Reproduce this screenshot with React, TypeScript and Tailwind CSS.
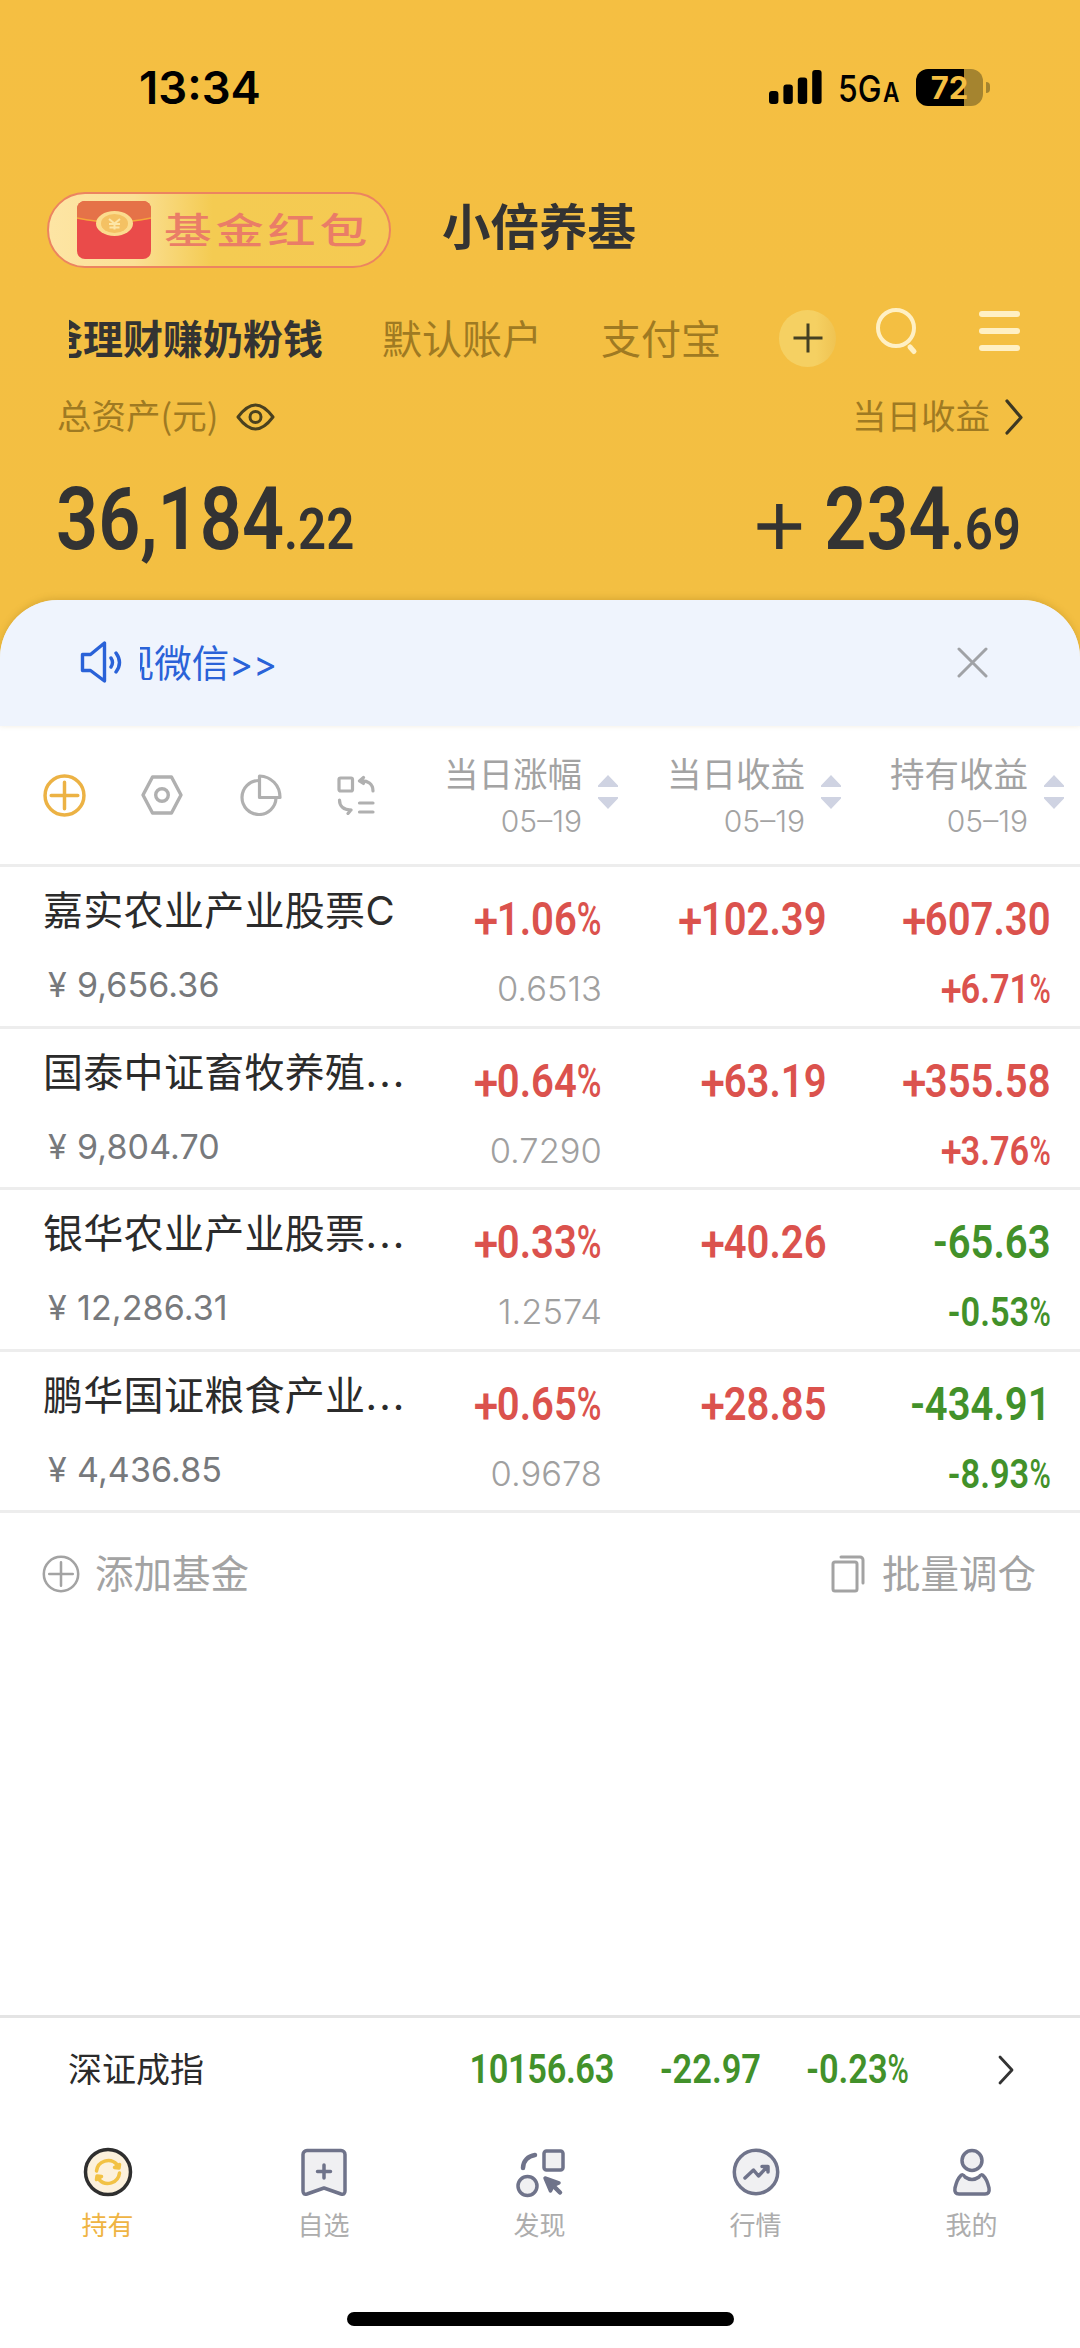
import type { ReactNode } from 'react';

type Tone = 'up' | 'down';

interface Fund {
  name: string;
  clipped?: boolean;
  amount: string;
  rate: string;
  nav: string;
  today: string;
  total: string;
  totalRate: string;
  tone: Tone;
}

const funds: Fund[] = [
  { name: '嘉实农业产业股票C', amount: '9,656.36', rate: '+1.06%', nav: '0.6513', today: '+102.39', total: '+607.30', totalRate: '+6.71%', tone: 'up' },
  { name: '国泰中证畜牧养殖', clipped: true, amount: '9,804.70', rate: '+0.64%', nav: '0.7290', today: '+63.19', total: '+355.58', totalRate: '+3.76%', tone: 'up' },
  { name: '银华农业产业股票', clipped: true, amount: '12,286.31', rate: '+0.33%', nav: '1.2574', today: '+40.26', total: '-65.63', totalRate: '-0.53%', tone: 'down' },
  { name: '鹏华国证粮食产业', clipped: true, amount: '4,436.85', rate: '+0.65%', nav: '0.9678', today: '+28.85', total: '-434.91', totalRate: '-8.93%', tone: 'down' },
];

const columns = ['当日涨幅', '当日收益', '持有收益'];

const toneClass: Record<Tone, string> = { up: 'text-[#db524d]', down: 'text-[#42912a]' };

function StatusBar() {
  return (
    <div className="flex h-[174px] items-center pl-[139px] pr-[90px] text-black">
      <span className="origin-left scale-x-[1.01] font-[Inter] text-[45px] font-semibold leading-none">13:34</span>
      <div className="ml-auto flex items-center">
        <svg width="54" height="34" viewBox="0 0 54 34">
          <rect x="0" y="21" width="9.4" height="13" rx="3" />
          <rect x="14.4" y="14.5" width="9.4" height="19.5" rx="3" />
          <rect x="28.8" y="7.5" width="9.4" height="26.5" rx="3" />
          <rect x="43.2" y="0" width="9.4" height="34" rx="3" />
        </svg>
        <div className="ml-[15px] mt-[3px] flex w-[78px] items-baseline font-[Inter] font-medium leading-none">
          <span className="origin-left scale-x-[0.86] text-[37px]">5G</span>
          <span className="-ml-[6px] text-[27px] font-semibold leading-none">
            <span className="inline-block origin-left scale-x-[0.84]">A</span>
          </span>
        </div>
        <div className="flex h-[37px] w-[67px] items-center justify-center rounded-[12px] bg-[linear-gradient(90deg,#000_72%,#a5842f_72%)]">
          <span className="font-[Inter] text-[31px] font-bold leading-none text-[#f5bf42]">72</span>
        </div>
        <div className="ml-[3px] h-[11px] w-1 rounded-r-full bg-[#a5842f]" />
      </div>
    </div>
  );
}

function RedPacket() {
  return (
    <svg width="74" height="58" viewBox="0 0 74 58">
      <rect width="74" height="58" rx="8" fill="#ea4b4a" />
      <path d="M0 18V8a8 8 0 0 1 8-8h58a8 8 0 0 1 8 8v10Q37 24 0 18Z" fill="#e57248" />
      <path d="M0 17Q37 25 74 17" fill="none" stroke="#f6a63a" strokeWidth="1.6" />
      <ellipse cx="37.500" cy="22.500" rx="18.500" ry="12.500" fill="#fbdc8e" />
      <ellipse cx="37.500" cy="22.500" rx="13.500" ry="9.500" fill="#f4c163" />
      <path d="m32 18 5.500 4.500L43 18M32 23h11M32.500 26.500h10M37.500 22.500v6" fill="none" stroke="#fde6a6" strokeWidth="2" />
    </svg>
  );
}

function PlusCircle({ size, width }: { size: number; width: number }) {
  return (
    <svg width={size} height={size} viewBox="0 0 42 42" fill="none" stroke="currentColor" strokeWidth={width} strokeLinecap="round">
      <circle cx="21" cy="21" r="19" />
      <path d="M21 8v26M8 21h26" />
    </svg>
  );
}

function Header() {
  return (
    <header className="h-[600px] bg-linear-to-b from-[#f5bf42] to-[#f3bf42] text-[#333]">
      <StatusBar />
      <div className="flex h-[112px] items-center pl-[47px]">
        <div className="flex h-[76px] w-[344px] items-center rounded-full border-2 border-[#ec8460] bg-[linear-gradient(90deg,#fde5a4_0%,#fbe096_25%,#f4cb52_48%,#f5ca52_100%)] pl-7">
          <RedPacket />
          <span className="ml-[13px] origin-left scale-x-[1.33] pb-[4px] text-[36px] font-medium leading-none tracking-[3px] text-[#ea7d67]">基金红包</span>
        </div>
        <h1 className="ml-[51px] pb-[12px] text-[48.500px] font-bold leading-none">小倍养基</h1>
      </div>
      <div className="flex h-[104px] items-center">
        <div className="ml-[69px] flex w-[767px] items-center overflow-hidden text-[40px] leading-[60px]">
          <span className="-ml-[26px] shrink-0 pb-[3px] font-bold">爸理财赚奶粉钱</span>
          <span className="ml-[59px] shrink-0 pb-[3px] text-[#9f7a22]">默认账户</span>
          <span className="ml-[59px] shrink-0 pb-[3px] text-[#9f7a22]">支付宝</span>
          <span className="ml-[58px] flex size-[57px] shrink-0 items-center justify-center rounded-full bg-[linear-gradient(90deg,#f5d062_65%,#efc352_100%)]">
            <svg width="30" height="30" viewBox="0 0 30 30" stroke="#444023" strokeWidth="3">
              <path d="M15 0.500v29M0.500 15h29" />
            </svg>
          </span>
        </div>
        <svg className="mb-[15px] ml-[40px]" width="42" height="50" viewBox="0 0 42 50" fill="none" stroke="#fff0c4" strokeLinecap="round">
          <circle cx="20" cy="22" r="18" strokeWidth="4" />
          <path d="m34 41 4 4.500" strokeWidth="5" />
        </svg>
        <svg className="mb-[15px] ml-[61px]" width="41" height="42" viewBox="0 0 41 42" stroke="#fff0c4" strokeWidth="6" strokeLinecap="round">
          <path d="M3 4h35M3 21h35M3 38h35" />
        </svg>
      </div>
      <div className="flex h-[52px] items-center pl-[57px] pr-[57px] text-[34.500px] leading-none text-[#9f7a22]">
        <span className="pb-[3px]">总资产(元)</span>
        <svg className="ml-[18px] mt-px" width="39" height="28" viewBox="0 0 39 28" fill="none" stroke="#4a411f" strokeWidth="3">
          <path d="M2 14C5 10 11 2 19.500 2S34 10 37 14c-3 4-9 12-17.500 12S5 18 2 14Z" strokeLinejoin="round" />
          <circle cx="19.500" cy="14" r="5.500" />
        </svg>
        <span className="ml-auto pb-[3px]">当日收益</span>
        <svg className="ml-[15px] mt-px" width="18" height="36" viewBox="0 0 18 36" fill="none" stroke="#3d3823" strokeWidth="3.200" strokeLinecap="round" strokeLinejoin="round">
          <path d="m2 2 14 16.500L2 34" />
        </svg>
      </div>
      <div className="flex items-baseline justify-between pl-[56px] pr-[59px] pt-[34px] font-[Roboto] font-semibold leading-none">
        <div className="origin-left scale-x-[0.848] whitespace-nowrap">
          <span className="text-[87px]">36,184</span>
          <span className="text-[58px]">.22</span>
        </div>
        <div className="flex origin-right scale-x-[0.848] items-baseline whitespace-nowrap">
          <svg className="mr-[27px]" width="52" height="45" viewBox="0 0 52 45" stroke="currentColor">
            <path d="M26 0v45" strokeWidth="7.600" />
            <path d="M0 22.500h52" strokeWidth="6.400" />
          </svg>
          <span className="text-[87px]">234</span>
          <span className="text-[58px]">.69</span>
        </div>
      </div>
    </header>
  );
}

function Notice() {
  return (
    <div className="flex h-[126px] items-center rounded-t-[58px] bg-[#eff4fd] pb-[2px] pl-20 pr-[92px] shadow-[0_-2px_6px_rgba(150,110,20,0.25)]">
      <svg width="42" height="42" viewBox="0 0 42 42" fill="none" stroke="#2a62d8" strokeWidth="3.400" strokeLinecap="round" strokeLinejoin="round">
        <path d="M2.500 13.500h8L24.500 2v38L10.500 29.500h-8Z" />
        <path d="M31 17q3 4.500 0 9M36 12q7 9.500 0 19" />
      </svg>
      <div className="ml-[18px] flex w-[137px] justify-end overflow-hidden text-[37.500px] leading-[56px] text-[#2a62d8]">
        <span className="shrink-0">现微信<span className="inline-block font-[Inter] text-[36px] font-normal">&gt;&gt;</span></span>
      </div>
      <svg className="ml-auto" width="31" height="31" viewBox="0 0 31 31" stroke="#a0a2a6" strokeWidth="3" strokeLinecap="round">
        <path d="m2 2 27 27M29 2 2 29" />
      </svg>
    </div>
  );
}

function SortArrows() {
  return (
    <svg className="mb-[7px]" width="20" height="34" viewBox="0 0 20 34" fill="#cfd3e2">
      <path d="M10 0 20 10.500V12H0v-1.500ZM0 22h20v1.500L10 34 0 23.500Z" />
    </svg>
  );
}

function Toolbar() {
  return (
    <div className="flex h-[141px] items-center border-b-[3px] border-[#ededed] pl-[43px] pr-4 text-[#b0b0b0]">
      <span className="text-[#ecb244]"><PlusCircle size={43} width={3.4} /></span>
      <svg className="ml-[55px]" width="42" height="40" viewBox="0 0 42 40" fill="none" stroke="currentColor" strokeWidth="3.400" strokeLinejoin="round">
        <path d="M11.500 2h19L40 20l-9.500 18h-19L2 20Z" />
        <circle cx="21" cy="20" r="6.300" />
      </svg>
      <svg className="ml-[57px]" width="42" height="42" viewBox="0 0 42 42" fill="none" stroke="currentColor" strokeWidth="3.200" strokeLinejoin="round">
        <path d="M19 6.500A17 17 0 1 0 36 24" />
        <path d="M19.500 2v21.500H40C40 11 31 2.500 19.500 2Z" />
      </svg>
      <svg className="ml-[55px]" width="38" height="40" viewBox="0 0 38 40" fill="none" stroke="currentColor" strokeWidth="3.200" strokeLinecap="round" strokeLinejoin="round">
        <rect x="2" y="3" width="13.500" height="13" rx="1.500" />
        <path d="M22.500 6C31 5 36 9 36 16M22.500 6l4-3.500M22.500 6l4 2.500M2.500 25c0 6 4 10 11.500 10M14 35l-4.500-.5M14 35l-3 3.500M22.500 28H36M22.500 37H36" />
      </svg>
      <div className="ml-auto flex">
        {columns.map((label) => (
          <div key={label} className="flex w-[223px] items-center justify-end gap-[16px] text-right text-[#a3a3a3]">
            <div>
              <div className="text-[34.500px] leading-[50px]">{label}</div>
              <div className="pt-[2px] font-[Inter] text-[30px] font-light leading-[44px]">05–19</div>
            </div>
            <SortArrows />
          </div>
        ))}
      </div>
    </div>
  );
}

// Narrow digits anchored to the right edge of their cell; the sign and the percent mark are drawn lighter
function Value({ small, className, children }: { small?: boolean; className: string; children: string }) {
  const sign = children[0] === '+' || children[0] === '-' ? children[0] : '';
  const percent = children.endsWith('%');
  const digits = children.slice(sign.length, percent ? -1 : undefined);
  return (
    <div className={`origin-right whitespace-nowrap text-right font-[Roboto] font-semibold ${small ? 'scale-x-[0.86] text-[40px] leading-[60px]' : 'scale-x-[0.87] text-[46px] leading-[70px]'} ${className}`}>
      {sign === '+' && <span className="inline-block translate-y-[0.03em] scale-110 font-medium leading-none">+</span>}
      {sign === '-' && <span>-</span>}
      {digits}
      {percent && (
        <span className="inline-block w-[0.62em] text-left font-medium leading-none">
          <span className="inline-block origin-left scale-x-[0.84]">%</span>
        </span>
      )}
    </div>
  );
}

function FundRow({ fund }: { fund: Fund }) {
  return (
    <div className="flex h-[161.5px] border-b-[3px] border-[#ededed] pl-[43px] pr-[29px]">
      <div className="w-[380px] pt-[14px]">
        <div className="whitespace-nowrap text-[40px] leading-[60px] tracking-[0.3px] text-[#2b2b2b] font-[Inter,'Noto_Sans_CJK_SC',sans-serif]">
          {fund.name}
          {fund.clipped && <span className="tracking-[2.200px]">...</span>}
        </div>
        <div className="flex items-center pt-[20px] font-[Inter] text-[34px] leading-[48px] text-[#77797c]">
          <span className="w-[34px] pl-[5px]">¥</span>
          <span className="tracking-[0.1px]">{fund.amount}</span>
        </div>
      </div>
      <div className="ml-auto w-[180px] pt-[17px]">
        <Value className={toneClass.up}>{fund.rate}</Value>
        <div className="pt-[10px] text-right font-[Inter] text-[34.500px] font-light leading-[50px] text-[#a0a0a0]">{fund.nav}</div>
      </div>
      <div className="w-[225px] pt-[17px]">
        <Value className={toneClass.up}>{fund.today}</Value>
      </div>
      <div className="w-[225px] pt-[17px]">
        <Value className={toneClass[fund.tone]}>{fund.total}</Value>
        <Value small className={`pt-[6px] ${toneClass[fund.tone]}`}>{fund.totalRate}</Value>
      </div>
    </div>
  );
}

function Actions() {
  return (
    <div className="flex h-[122px] items-center pl-[42px] pr-[44px] text-[38.500px] leading-none text-[#a3a3a3]">
      <PlusCircle size={38} width={2.8} />
      <span className="ml-[15px] pb-[6px]">添加基金</span>
      <svg className="ml-auto" width="34" height="38" viewBox="0 0 34 38" fill="none" stroke="currentColor" strokeWidth="3" strokeLinejoin="round" strokeLinecap="round">
        <rect x="2" y="7" width="24" height="29" rx="2" />
        <path d="M10 2h19a3 3 0 0 1 3 3v23" />
      </svg>
      <span className="ml-[17px] pb-[6px]">批量调仓</span>
    </div>
  );
}

function IndexBar() {
  return (
    <div className="flex h-[107px] items-center border-t-[3px] border-[#e4e4e4] pl-[68px] pr-[66px]">
      <span className="pb-1 text-[34px] leading-none text-[#2b2b2b]">深证成指</span>
      <div className="ml-auto w-[180px]"><Value small className={`tracking-[-0.4px] ${toneClass.down}`}>10156.63</Value></div>
      <div className="w-[147px]"><Value small className={toneClass.down}>-22.97</Value></div>
      <div className="w-[148px]"><Value small className={toneClass.down}>-0.23%</Value></div>
      <svg className="ml-[89px]" width="16" height="30" viewBox="0 0 16 30" fill="none" stroke="#333" strokeWidth="2.800" strokeLinecap="round" strokeLinejoin="round">
        <path d="m2 2 12 13L2 28" />
      </svg>
    </div>
  );
}

const tabs: { label: string; active?: boolean; icon: ReactNode }[] = [
  {
    label: '持有',
    active: true,
    icon: (
      <>
        <circle cx="25" cy="25" r="22.500" fill="#fcf1dc" stroke="#2f2f2f" strokeWidth="3.500" />
        <g fill="none" stroke="#f2c244" strokeWidth="3.500" strokeLinecap="round" strokeLinejoin="round">
          <path d="M13.500 24A11.800 11.800 0 0 1 34 17.500M36.500 26A11.800 11.800 0 0 1 16 32.500" />
          <path d="m36.500 17.500-.5 3.500-4.500-.5ZM13.500 32.500l.5-3.500 4.500.5Z" fill="#f2c244" />
        </g>
      </>
    ),
  },
  {
    label: '自选',
    icon: (
      <>
        <path d="M8 3.500h34a4 4 0 0 1 4 4V44q0 4-4 3L25 41 8 47q-4 1-4-3V7.500a4 4 0 0 1 4-4Z" />
        <path d="M25 18v13M18.500 24.500h13" />
      </>
    ),
  },
  {
    label: '发现',
    icon: (
      <>
        <rect x="29" y="4" width="19" height="19" rx="2.500" />
        <circle cx="12.500" cy="39" r="9.500" />
        <path d="M8 21C8 14 13 9 20 8" fill="none" strokeWidth="4.500" />
        <path d="m30 31 14 5-5.500 2.500-3 5.500Z" fill="#6f738a" />
        <path d="m38 38.500 7 7" strokeWidth="4.500" />
      </>
    ),
  },
  {
    label: '行情',
    icon: (
      <>
        <circle cx="25" cy="25" r="21.700" />
        <path d="m14 31 8.500-8 5 6 9-9.500M31 19.500h6V25" fill="none" />
      </>
    ),
  },
  {
    label: '我的',
    icon: (
      <>
        <circle cx="25" cy="13.500" r="10" />
        <path d="M13 29.500Q16 26 18 30q7 5 14 0 2-4 5-.5 3 3 5 11.500 1 6-4 6H12q-5 0-4-6 2-8.500 5-11.500Z" />
      </>
    ),
  },
];

function TabBar() {
  return (
    <nav className="grid grid-cols-5 pt-[24px]">
      {tabs.map((tab) => (
        <div key={tab.label} className={`flex flex-col items-center ${tab.active ? 'text-[#efb443]' : 'text-[#adadad]'}`}>
          <svg width="52" height="52" viewBox="-1 -1 52 52" fill="#f0f0f2" stroke="#6f738a" strokeWidth="3.500" strokeLinecap="round" strokeLinejoin="round">
            {tab.icon}
          </svg>
          <span className="mt-[6px] pr-px text-[26px] leading-[40px]">{tab.label}</span>
        </div>
      ))}
    </nav>
  );
}

export default function App() {
  return (
    <div className="flex h-[2348px] w-[1080px] flex-col overflow-hidden bg-[#f3bf42] font-['Noto_Sans_CJK_SC',sans-serif]">
      <Header />
      <main className="flex flex-1 flex-col rounded-t-[58px] bg-white">
        <Notice />
        <Toolbar />
        {funds.map((fund) => (
          <FundRow key={fund.name} fund={fund} />
        ))}
        <Actions />
        <footer className="mt-auto h-[333px]">
          <IndexBar />
          <TabBar />
          <div className="mx-auto mt-[68px] h-[14px] w-[387px] rounded-full bg-black" />
        </footer>
      </main>
    </div>
  );
}
